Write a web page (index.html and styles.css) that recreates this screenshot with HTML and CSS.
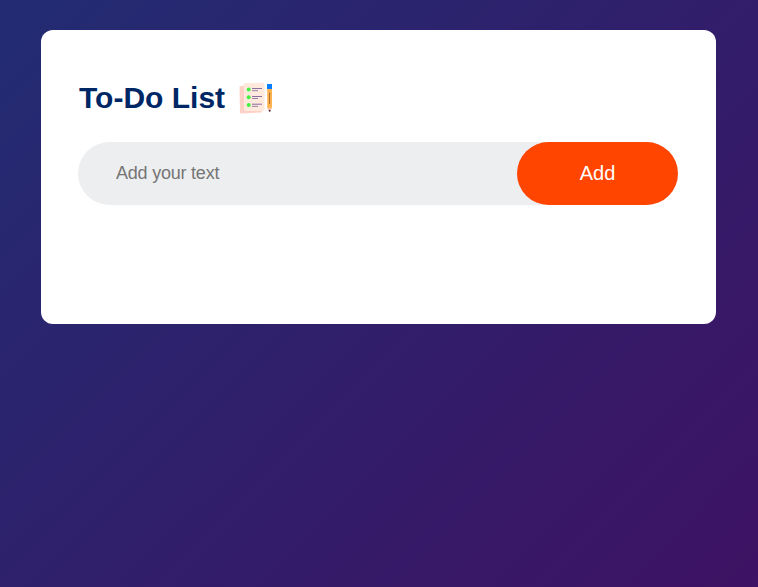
FILE: index.html
```html
<!DOCTYPE html>
<html lang="en">
<head>
<meta charset="utf-8">
<title>To-Do List</title>
<link rel="stylesheet" href="styles.css">
</head>
<body>
<div class="container">
  <div class="todo-app">
    <h2>To-Do List
      <svg class="icon" viewBox="0 0 36 34">
        <path d="M1.500 5.500 L6 4.500 V29 H24 L23.500 31.500 L3 32.500 Q2 32.500 2 31 Z" fill="#ffd0c5"/>
        <rect x="6" y="2" width="20.500" height="28" rx="1" fill="#ffe8dc"/>
        <g fill="#43f043"><circle cx="10.700" cy="8.500" r="2"/><circle cx="10.700" cy="16.200" r="2"/><circle cx="10.700" cy="24" r="2"/></g>
        <path d="M14 7.500h10M14 15.500h10M14 23.200h10" stroke="#8870a0"/>
        <path d="M14 9.700h6M14 17.500h6M14 25.300h6" stroke="#8c759e" stroke-width=".9"/>
        <path d="M29.200 8h4.800v18l-1.300 3h-2.200l-1.300-3z" fill="#ffb34f"/>
        <path d="M29.400 27h4.400l-1.500 3h-1.400z" fill="#f8c7ad"/>
        <rect x="29" y="3" width="5" height="5" fill="#087fff"/>
        <path d="M31.600 11.500v11.500" stroke="#a66d32"/>
        <circle cx="31.700" cy="29.800" r="1" fill="#4a2940"/>
      </svg>
    </h2>
    <div class="row">
      <input type="text" placeholder="Add your text">
      <button>Add</button>
    </div>
  </div>
</div>
</body>
</html>
```
FILE: styles.css
```css
* { margin: 0; padding: 0; box-sizing: border-box; font-family: "Liberation Sans", Arial, sans-serif; }
.container { min-height: 100vh; padding: 30px 42px 30px 41px; background: linear-gradient(135deg, #222c72, #3e1264); }
.todo-app { height: 294px; padding: 50px 38px 0 37px; border-radius: 12px; background: #fff; }
h2 { display: flex; align-items: center; height: 36px; margin-bottom: 26px; padding-left: 1px; color: #002765; font-size: 30px; }
.icon { width: 36px; height: 34px; margin-left: 13px; }
.row { display: flex; height: 63px; border-radius: 32px; background: #edeef0; }
input { flex: 1; min-width: 0; padding-left: 38px; border: 0; background: transparent; font-size: 18px; letter-spacing: -0.22px; }
button { width: 161px; border: 0; border-radius: 32px; background: #ff4500; color: #fff; font-size: 20px; }
```
